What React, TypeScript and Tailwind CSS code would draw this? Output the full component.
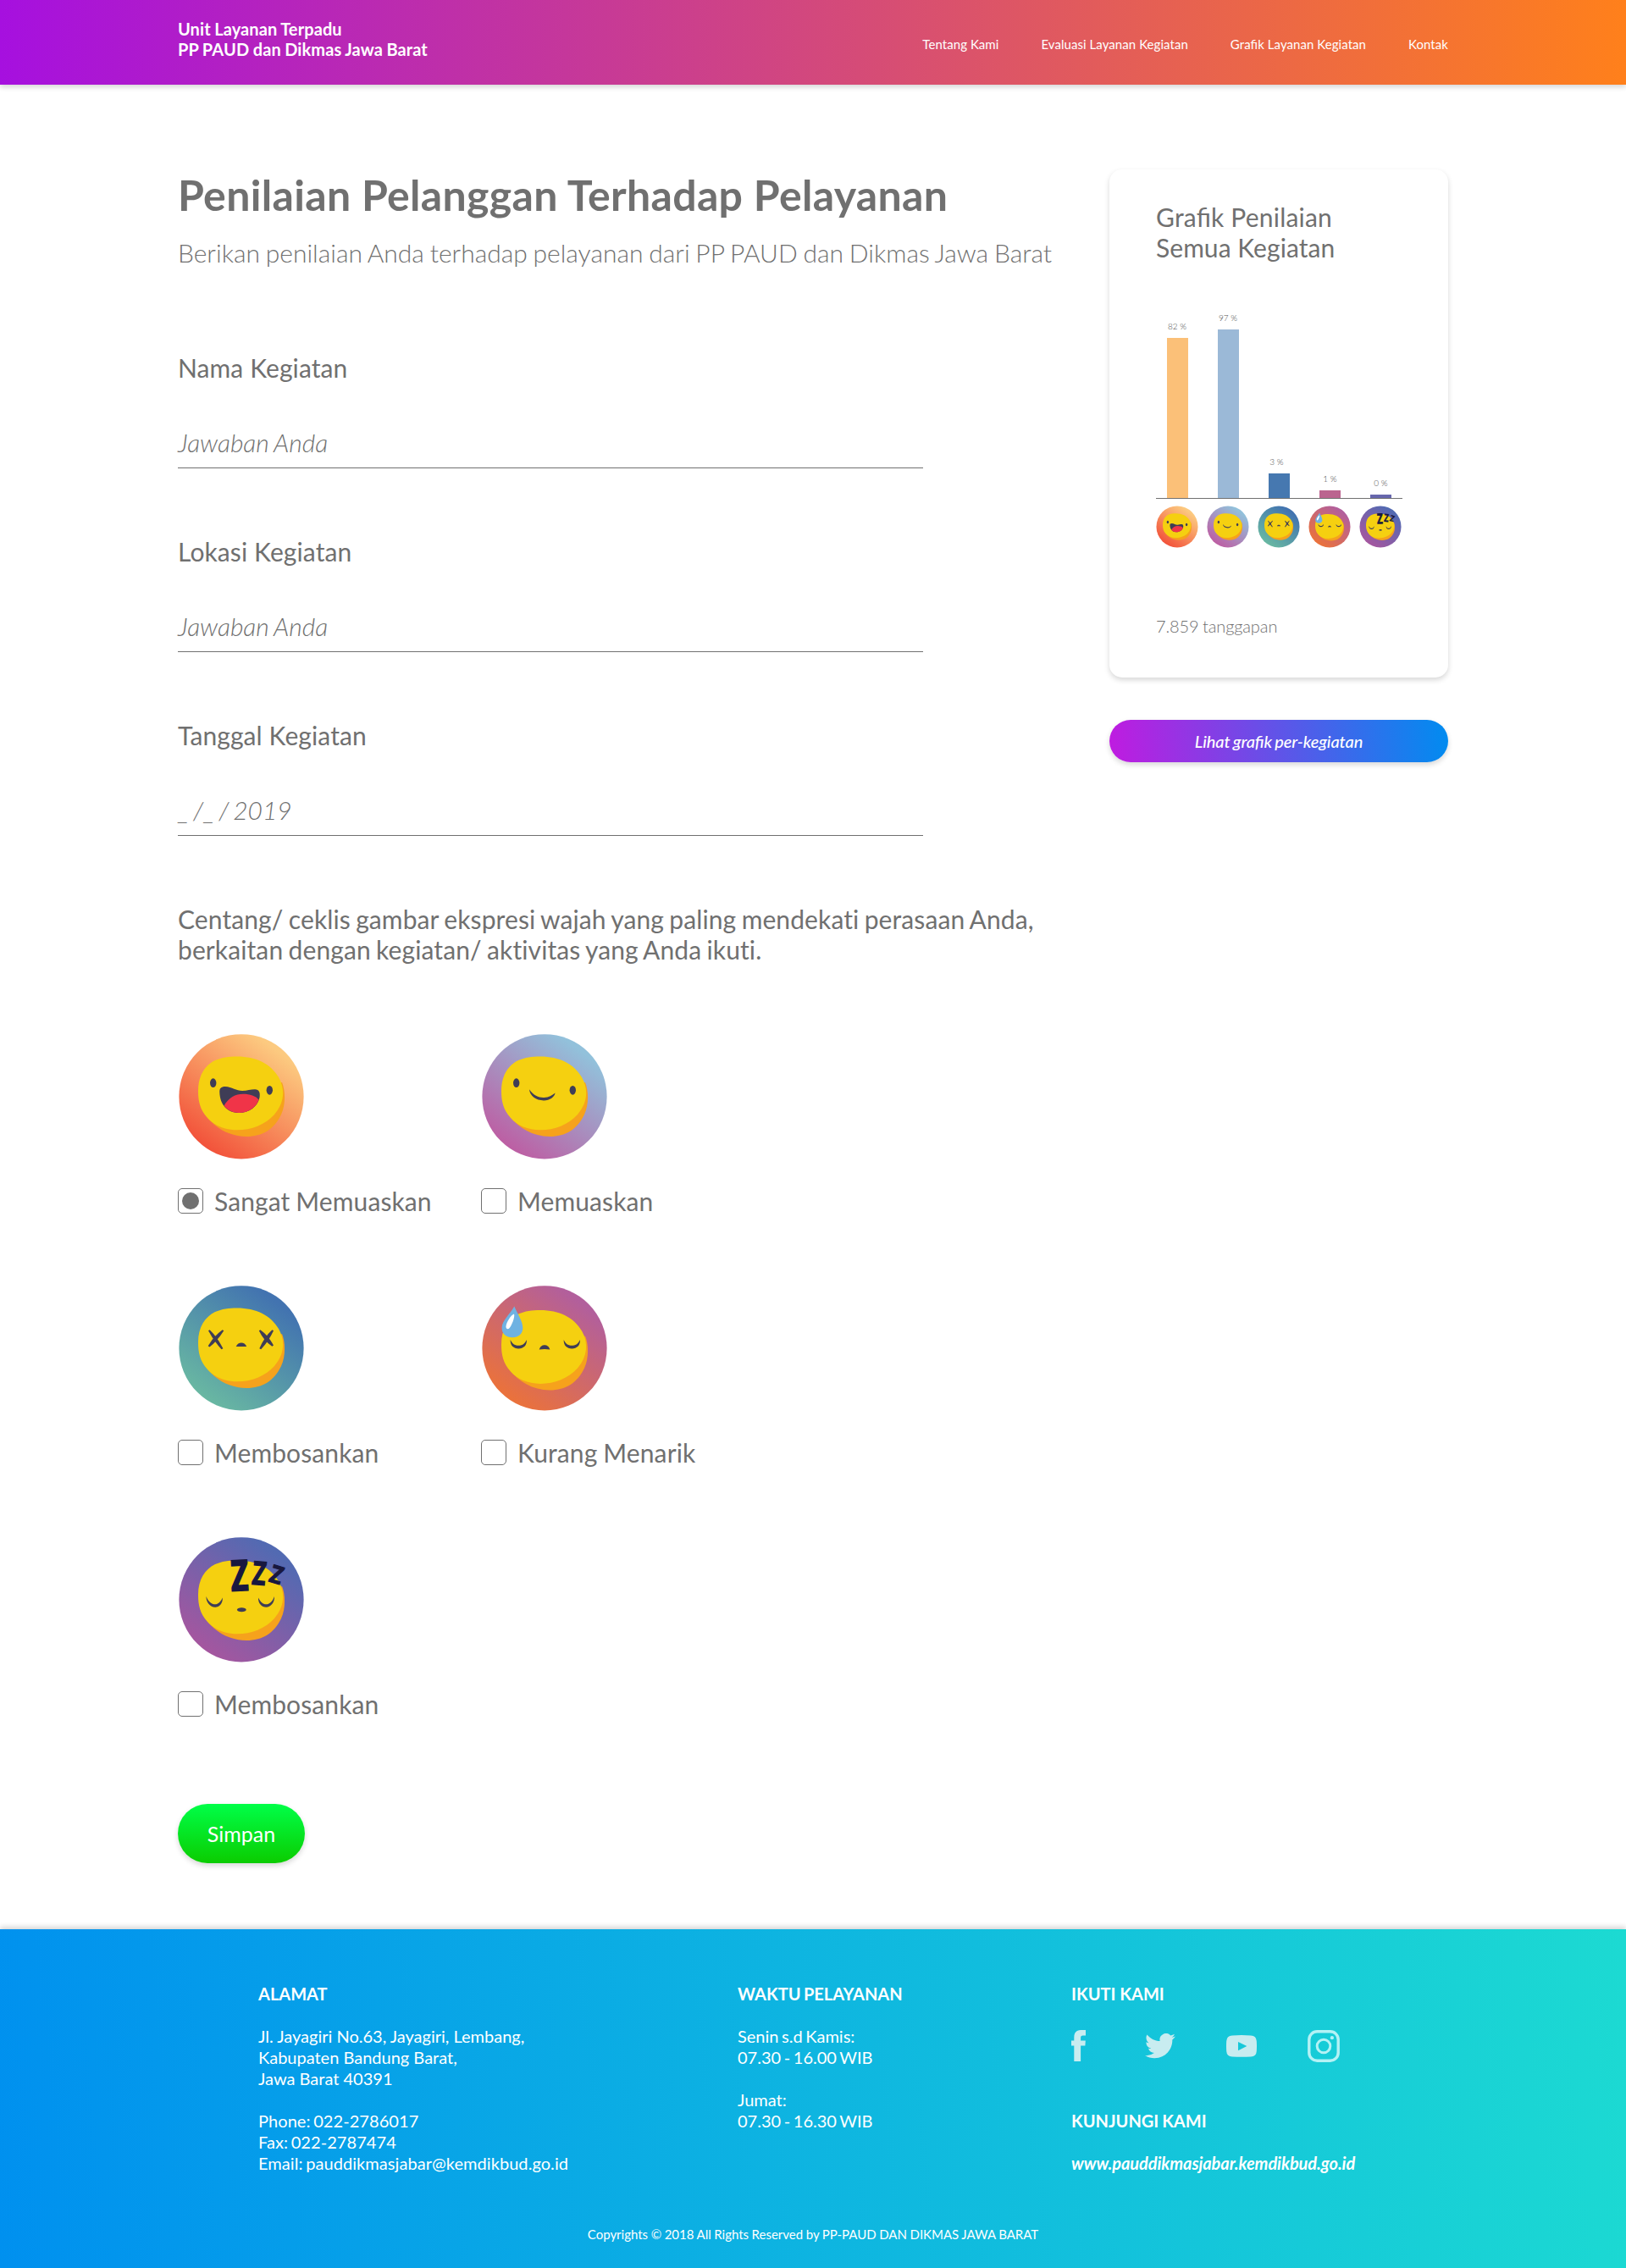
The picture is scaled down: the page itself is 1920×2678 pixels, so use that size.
import React from "react";

type Mood = "happy" | "smile" | "bored" | "sweat" | "sleepy";

const INK = "#3f3d56";

const GRADIENTS: Record<Mood, [string, string]> = {
  happy: ["#f2523a", "#fcca80"],
  smile: ["#bd5ea3", "#92c1db"],
  bored: ["#69b8a2", "#4273b0"],
  sweat: ["#eb723a", "#b25f9c"],
  sleepy: ["#a5569f", "#526ab2"],
};

const FACE_SHIFT: Record<Mood, number> = { happy: 0, smile: 0, bored: 0, sweat: 2.6, sleepy: 1 };

function Features({ mood }: { mood: Mood }) {
  switch (mood) {
    case "happy":
      return (
        <>
          <ellipse cx="41.7" cy="58.7" rx="3.7" ry="5.4" fill={INK} />
          <ellipse cx="108.3" cy="67.3" rx="3.7" ry="5.4" fill={INK} />
          <path d="M49.3 70C49 65 51 63 56 63c8 .5 13 5 20 5 6 0 10-1.700 15-1.700 5 .2 6.500 3.700 5.500 9.700C94 87 84 94 72 94 58 94 49.800 84 49.300 70Z" fill={INK} />
          <path d="M54.500 85.500C60 76 68 71.700 77 71.700c8 0 15 2.300 18.500 6.800C92.500 88 83 94 72 94c-7 0-13.500-3-17.500-8.500Z" fill="#f03448" />
        </>
      );
    case "smile":
      return (
        <>
          <ellipse cx="41.700" cy="58.700" rx="3.700" ry="5.400" fill={INK} />
          <ellipse cx="108.300" cy="67.300" rx="3.700" ry="5.400" fill={INK} />
          <path d="M57 66.300C62 74 68.500 76.300 74.500 76c5.500-.2 9.500-2.500 13-5.500C87 75 81.500 79.400 74 79.400 65 79.400 57.500 74 57 66.300Z" fill={INK} />
        </>
      );
    case "bored":
      return (
        <g fill={INK}>
          <path d="M36 54.200 37.600 53.200Q46 61 53.400 75.200L51.500 76.300Q42.500 66.500 36 54.200Z" />
          <path d="M54.300 54.200 52.700 53.200Q42.500 60.500 35.700 72.300L37.400 73.600Q47 66 54.300 54.200Z" />
          <path d="M95.800 54.200 97.400 53.200Q106.500 59.500 113 71.500L111.300 72.800Q101.500 66 95.800 54.200Z" />
          <path d="M113 54.200 111.400 53.200Q102.500 61 96.300 75.200L98.200 76.300Q107 67 113 54.200Z" />
          <path d="M68.700 73C70 70 72.500 68.600 75 68.600s5 1.400 6.200 4.400Z" />
        </g>
      );
    case "sweat":
      return (
        <>
          <g fill={INK}>
            <path d="M34.700 65C37 70.500 40.500 71.700 44.300 71.700S51.500 70.500 53.900 65C54.500 71.500 50 75.400 44.300 75.400S34.200 71.500 34.700 65Z" />
            <path d="M97.700 65C100 70.500 103.500 71.700 107.300 71.700S114.500 70.500 116.900 65C117.500 71.500 113 75.400 107.300 75.400S97.200 71.500 97.700 65Z" />
            <path d="M68.700 76.500C70 72.500 72.500 71.200 75 71.200s5.200 1.300 6.400 5.300Q75 75.600 68.700 76.500Z" />
          </g>
          <path d="M39.300 25.500C43 34 49.300 43 49.300 51c0 7-5.300 11.300-12.300 11.300S24.300 58 24.600 50.500C25 42 34.500 34.500 39.300 25.500Z" fill="#6fb2e2" />
          <path d="M39 34.600C40.500 38 35.500 50 33 51.800c-2 1-3.600 0-3.500-2.500.2-5 6-13.500 9.500-14.700Z" fill="#fff" />
        </>
      );
    case "sleepy":
      return (
        <>
          <g fill={INK}>
            <path d="M33.500 71C36 77.500 40 80.300 43.800 80.300S50.500 77.500 52.800 72.500C53.200 79 49.500 83.800 43.800 83.800S33.200 78 33.500 71Z" />
            <path d="M95 72.500C97.500 77.500 100.500 80.300 104.300 80.300S111.500 77.500 114 71C114.600 78 109.500 83.800 104.300 83.800S94.500 79 95 72.500Z" />
            <ellipse cx="75.300" cy="86.700" rx="5.400" ry="2.500" />
          </g>
          <g fill="#18183f" stroke="#18183f" strokeWidth="2" fontFamily="Lato, sans-serif" fontWeight="900" fontSize="50">
            <text transform="translate(63.500 64.500) rotate(-3) scale(.68 .98)">Z</text>
            <text transform="translate(87 56.500) rotate(5) scale(.53 .75)">Z</text>
            <text transform="translate(106.500 53) rotate(17) scale(.49 .57)">Z</text>
          </g>
        </>
      );
  }
}

function Emoji({ mood, id, className }: { mood: Mood; id: string; className: string }) {
  const [from, to] = GRADIENTS[mood];
  return (
    <svg viewBox="0 0 150 150" className={className} aria-hidden="true">
      <defs>
        <linearGradient id={id} x1="0.22" y1="0.92" x2="0.8" y2="0.14">
          <stop offset="0" stopColor={from} />
          <stop offset="1" stopColor={to} />
        </linearGradient>
      </defs>
      <circle cx="75" cy="74.800" r="73.600" fill={`url(#${id})`} />
      <g transform={`translate(0 ${FACE_SHIFT[mood]})`}>
        <path d="M123 58C127 68 127.500 84 122 96 114 113 100 122 81 122 61 121.500 44 112 34 98Z" fill="#f6a21c" />
        <path d="M70 27.400C92 27.400 110 36 119 52c8 14 7 30-5 44-11 12-27 18.300-44 18.300-15-.3-27-5.300-35-14.300C26 90 24 80 24 68c0-18 8-30 20-36 8-3.500 16-4.600 26-4.600Z" fill="#f5d010" />
      </g>
      <Features mood={mood} />
    </svg>
  );
}

const NAV = ["Tentang Kami", "Evaluasi Layanan Kegiatan", "Grafik Layanan Kegiatan", "Kontak"];

function Header() {
  return (
    <header className="h-[100px] bg-[linear-gradient(90deg,#a610df,#ff801b)] text-white shadow-[0_3px_6px_rgba(0,0,0,0.16)]">
      <div className="mx-auto flex w-[1500px] justify-between">
        <div className="mt-[22px] text-xl leading-6 font-bold tracking-[0.1px] [word-spacing:-0.5px]">
          Unit Layanan Terpadu
          <br />
          PP PAUD dan Dikmas Jawa Barat
        </div>
        <nav className="mt-[43px] flex gap-[50px] text-[15px] leading-[18px] tracking-[0.06px] [font-feature-settings:'liga'_1]">
          {NAV.map((n) => (
            <a key={n}>{n}</a>
          ))}
        </nav>
      </div>
    </header>
  );
}

const FIELDS = [
  { label: "Nama Kegiatan", value: "Jawaban Anda", spacing: "[word-spacing:-1.6px]" },
  { label: "Lokasi Kegiatan", value: "Jawaban Anda", spacing: "[word-spacing:-1.6px]" },
  { label: "Tanggal Kegiatan", value: "_ /_ / 2019", spacing: "[word-spacing:-2.8px]" },
];

const OPTIONS: { mood: Mood; label: string; checked?: boolean }[] = [
  { mood: "happy", label: "Sangat Memuaskan", checked: true },
  { mood: "smile", label: "Memuaskan" },
  { mood: "bored", label: "Membosankan" },
  { mood: "sweat", label: "Kurang Menarik" },
  { mood: "sleepy", label: "Membosankan" },
];

function SurveyForm() {
  return (
    <section className="w-[1060px] text-[30px] leading-9">
      <h1 className="text-[50px] leading-[60px] font-bold tracking-[0.33px]">Penilaian Pelanggan Terhadap Pelayanan</h1>
      <p className="mt-5 font-light [word-spacing:-1.35px]">Berikan penilaian Anda terhadap pelayanan dari PP PAUD dan Dikmas Jawa Barat</p>
      <div className="mt-[100px] flex flex-col gap-20">
        {FIELDS.map((f) => (
          <div key={f.label} className="h-[137px] w-[880px] border-b border-[#707070]">
            <div className="tracking-[0.1px]">{f.label}</div>
            <div className={`mt-[52px] font-light italic ${f.spacing}`}>{f.value}</div>
          </div>
        ))}
      </div>
      <p className="mt-20 tracking-[0.1px] [word-spacing:-1.45px]">
        Centang/ ceklis gambar ekspresi wajah yang paling mendekati perasaan Anda,
        <br />
        berkaitan dengan kegiatan/ aktivitas yang Anda ikuti.
      </p>
      <div className="mt-[81px] grid grid-cols-[358px_358px] gap-y-[81px]">
        {OPTIONS.map((o) => (
          <div key={o.mood}>
            <Emoji mood={o.mood} id={`option-${o.mood}`} className="size-[150px]" />
            <div className="mt-[30px] flex gap-[13px]">
              <span className="mt-[3px] flex size-[30px] items-center justify-center rounded-[5px] border border-[#707070]">
                {o.checked && <span className="size-5 rounded-full bg-[#707070]" />}
              </span>
              <span className="tracking-[0.1px] [word-spacing:-0.8px]">{o.label}</span>
            </div>
          </div>
        ))}
      </div>
      <button className="mt-[100px] block h-[70px] w-[150px] rounded-full bg-[linear-gradient(180deg,#00ff48,#0bcc00)] text-[25px] leading-[30px] text-white shadow-[0_3px_6px_rgba(0,0,0,0.16)]">
        Simpan
      </button>
    </section>
  );
}

const BARS: { mood: Mood; label: string; bar: string; text: string }[] = [
  { mood: "happy", label: "82 %", bar: "h-[189px] bg-[#fbc078]", text: "" },
  { mood: "smile", label: "97 %", bar: "h-[199px] bg-[#9bb9d7]", text: "" },
  { mood: "bored", label: "3 %", bar: "h-[29px] bg-[#4678b0]", text: "pr-[5px]" },
  { mood: "sweat", label: "1 %", bar: "h-[9px] bg-[#bb648f]", text: "pl-[1px]" },
  { mood: "sleepy", label: "0 %", bar: "h-[4px] bg-[#6767ad]", text: "pl-[1px]" },
];

function ChartCard() {
  return (
    <div className="h-[600px] rounded-[15px] bg-white pt-[38px] pl-[55px] shadow-[0_3px_6px_rgba(0,0,0,0.16)]">
      <h2 className="text-[30px] leading-9 [font-feature-settings:'liga'_1]">
        <span className="block tracking-[0.2px]">Grafik Penilaian</span>
        <span className="block tracking-[0.05px]">Semua Kegiatan</span>
      </h2>
      <div className="mt-[50px] flex h-[229px] w-[291px] items-end gap-[10px] border-b border-[#707070]">
        {BARS.map((b) => (
          <div key={b.mood} className="flex w-[50px] flex-col items-center">
            <span className={`mb-2 text-[10px] leading-3 font-light text-[#505050] ${b.text}`}>{b.label}</span>
            <div className={`w-[25px] ${b.bar}`} />
          </div>
        ))}
      </div>
      <div className="mt-2 flex gap-[10px]">
        {BARS.map((b) => (
          <Emoji key={b.mood} mood={b.mood} id={`bar-${b.mood}`} className="size-[50px]" />
        ))}
      </div>
      <p className="mt-20 text-xl leading-6 font-light tracking-[-0.1px] [word-spacing:-1px]">7.859 tanggapan</p>
    </div>
  );
}

function SocialIcons() {
  return (
    <div className="flex h-[39px] items-center text-[#c8ecf0]">
      <svg viewBox="0 0 17 37" className="h-[37px] w-[17px]" fill="currentColor">
        <path d="M17 0v6.600h-3.200c-2.200 0-2.700 1-2.700 2.800v3h5.700l-.4 6.100h-5.300V37H3.300V18.500H0v-6.100h3.300V8.500C3.300 3 6 .2 11.200 0Z" />
      </svg>
      <svg viewBox="0 0 24 20" className="ml-[70px] h-[30px] w-9" fill="currentColor">
        <path d="M23.950 2.370a10 10 0 0 1-2.820.77 4.960 4.960 0 0 0 2.160-2.720c-.95.550-2 .950-3.130 1.180a4.920 4.920 0 0 0-8.380 4.480C7.690 5.890 4.070 3.920 1.640.96a4.820 4.820 0 0 0-.67 2.470c0 1.710.87 3.210 2.190 4.100a4.900 4.900 0 0 1-2.230-.62v.06a4.920 4.920 0 0 0 3.950 4.830 5 5 0 0 1-2.210.08 4.940 4.940 0 0 0 4.600 3.420A9.870 9.870 0 0 1 0 17.340 13.990 13.990 0 0 0 7.550 19.550c9.050 0 14-7.500 14-13.980 0-.210 0-.420-.02-.630a9.940 9.940 0 0 0 2.460-2.550Z" />
      </svg>
      <svg viewBox="0 0 36 26" className="ml-[60px] h-[26px] w-9" fill="currentColor">
        <path fillRule="evenodd" d="M7 .4Q18-.3 29 .4 35.500.8 35.800 7q.4 6 0 12Q35.500 25 29 25.500q-11 .6-22 0Q.6 25 .2 19q-.4-6 0-12Q.6.8 7 .4ZM14 8v10.200L24.300 13Z" />
      </svg>
      <svg viewBox="0 0 38 38" className="ml-[60px] size-[38px]" fill="none" stroke="#b4f2f5">
        <rect x="1.800" y="1.800" width="34.400" height="34.400" rx="9.500" strokeWidth="3.400" />
        <circle cx="19" cy="19" r="7.800" strokeWidth="3" />
        <circle cx="28.900" cy="9.200" r="2.100" fill="#b4f2f5" stroke="none" />
      </svg>
    </div>
  );
}

function Footer() {
  return (
    <footer className="mt-[78px] h-[400px] bg-[linear-gradient(84deg,#0090ef,#1cdad2)] text-xl leading-[25px] text-white shadow-[0_-3px_6px_rgba(0,0,0,0.16)]">
      <div className="flex h-[350px] pt-16 pl-[305px]">
        <div className="w-[566px]">
          <h3 className="font-bold">ALAMAT</h3>
          <p className="mt-[25px]">
            Jl. Jayagiri No.63, Jayagiri, Lembang,
            <br />
            Kabupaten Bandung Barat,
            <br />
            Jawa Barat 40391
          </p>
          <p className="mt-[25px] tracking-[0.06px] [word-spacing:-1.5px]">
            Phone: 022-2786017
            <br />
            Fax: 022-2787474
            <br />
            Email: pauddikmasjabar@kemdikbud.go.id
          </p>
        </div>
        <div className="w-[394px]">
          <h3 className="font-bold [word-spacing:-1.5px]">WAKTU PELAYANAN</h3>
          <p className="mt-[25px] [word-spacing:-1.5px]">
            Senin s.d Kamis:
            <br />
            07.30 - 16.00 WIB
          </p>
          <p className="mt-[25px] [word-spacing:-1.5px]">
            Jumat:
            <br />
            07.30 - 16.30 WIB
          </p>
        </div>
        <div>
          <h3 className="mb-[29px] font-bold">IKUTI KAMI</h3>
          <SocialIcons />
          <h3 className="mt-[57px] font-bold [word-spacing:-1px]">KUNJUNGI KAMI</h3>
          <p className="mt-[25px] font-bold tracking-[-0.07px] italic">www.pauddikmasjabar.kemdikbud.go.id</p>
        </div>
      </div>
      <p className="text-center text-[15px] leading-5 [word-spacing:-0.3px]">
        Copyrights © 2018 All Rights Reserved by PP-PAUD DAN DIKMAS JAWA BARAT
      </p>
    </footer>
  );
}

export default function App() {
  return (
    <div className="w-[1920px] bg-white font-[Lato,sans-serif] text-[#707070]">
      <Header />
      <main className="mx-auto flex w-[1500px] justify-between pt-[100px]">
        <SurveyForm />
        <aside className="w-[400px]">
          <ChartCard />
          <button className="mt-[50px] block h-[50px] w-[400px] rounded-full bg-[linear-gradient(84deg,#c01be0,#008cf0)] text-xl leading-6 font-medium tracking-[-0.1px] text-white italic shadow-[0_3px_6px_rgba(0,0,0,0.16)] [font-feature-settings:'liga'_1] [word-spacing:-1.3px]">
            Lihat grafik per-kegiatan
          </button>
        </aside>
      </main>
      <Footer />
    </div>
  );
}
